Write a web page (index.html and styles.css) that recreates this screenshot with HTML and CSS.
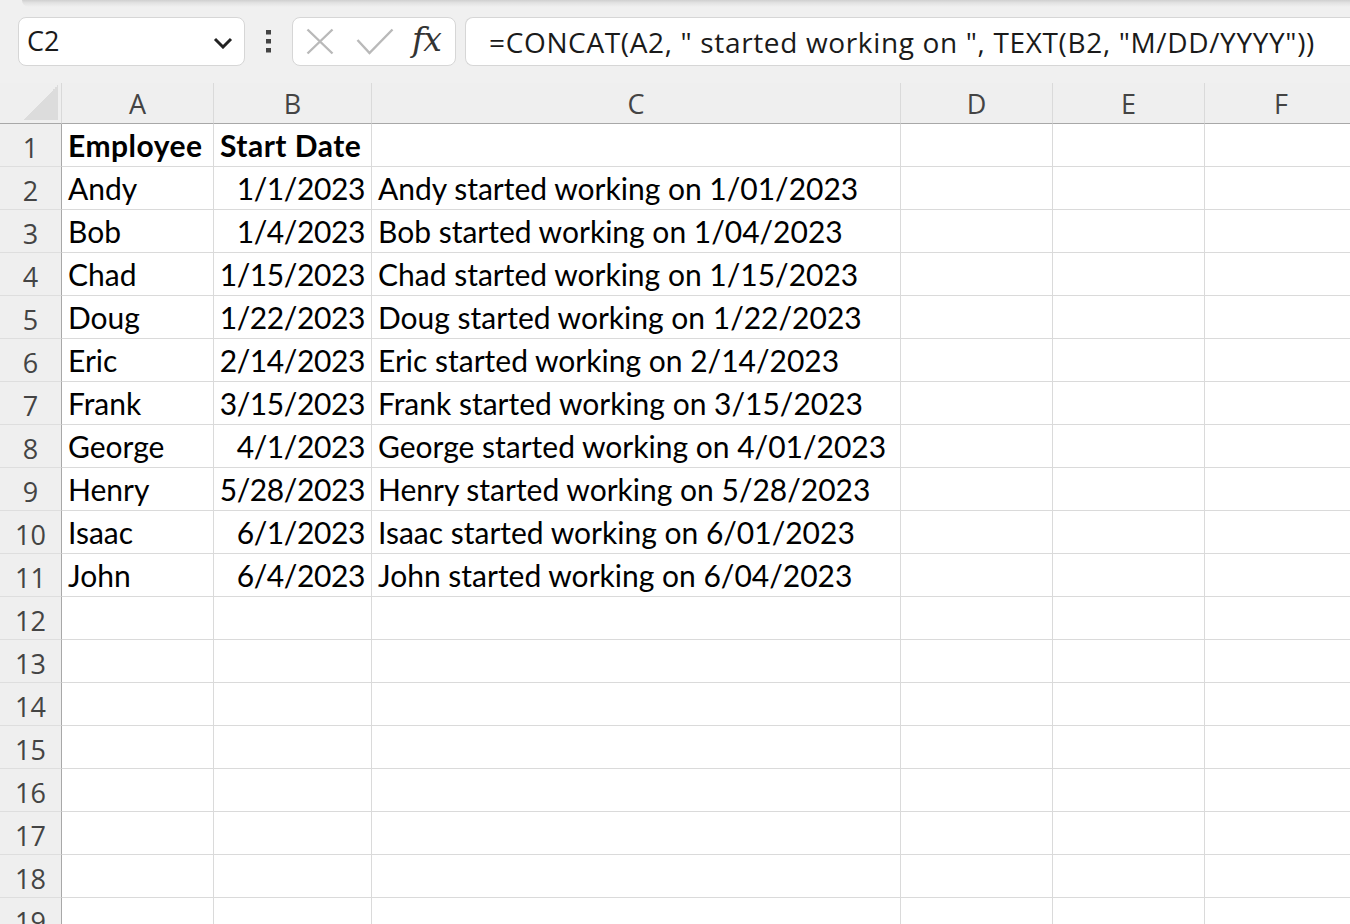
FILE: index.html
```html
<!DOCTYPE html>
<html>
<head>
<meta charset="utf-8">
<link rel="stylesheet" href="styles.css">
</head>
<body>
<div class="app">
  <div class="topbar">
    <div class="shadow"></div>
    <div class="fbar">
      <div class="namebox">
        <span class="nb-text">C2</span>
        <svg class="chev" width="20" height="12" viewBox="0 0 20 12"><path d="M2 2 L10 10 L18 2" fill="none" stroke="#222" stroke-width="3"/></svg>
      </div>
      <svg class="dots" width="6" height="24" viewBox="0 0 6 24"><rect x="0" y="0" width="5" height="4.5" fill="#444"/><rect x="0" y="9" width="5" height="4.5" fill="#444"/><rect x="0" y="18" width="5" height="4.5" fill="#444"/></svg>
      <div class="fxbox">
        <svg class="ic-x" width="28" height="27" viewBox="0 0 28 27"><path d="M1.5 1.5 L26.5 25.5 M26.5 1.5 L1.5 25.5" fill="none" stroke="#b9b9b9" stroke-width="2.4"/></svg>
        <svg class="ic-check" width="38" height="27" viewBox="0 0 38 27"><path d="M1.5 12 L13.5 25 L36.5 1.5" fill="none" stroke="#b9b9b9" stroke-width="2.4"/></svg>
        <span class="fx">fx</span>
      </div>
      <div class="formula">=CONCAT(A2, " started working on ", TEXT(B2, "M/DD/YYYY"))</div>
    </div>
  </div>
  <div class="sheet">
    <div class="corner"><div class="tri"></div></div>
    <div class="ch">A</div><div class="ch">B</div><div class="ch">C</div><div class="ch">D</div><div class="ch">E</div><div class="ch last">F</div>

    <div class="rh">1</div><div class="c b">Employee</div><div class="c b">Start Date</div><div class="c"></div><div class="c"></div><div class="c"></div><div class="c"></div>
    <div class="rh">2</div><div class="c">Andy</div><div class="c r">1/1/2023</div><div class="c">Andy started working on 1/01/2023</div><div class="c"></div><div class="c"></div><div class="c"></div>
    <div class="rh">3</div><div class="c">Bob</div><div class="c r">1/4/2023</div><div class="c">Bob started working on 1/04/2023</div><div class="c"></div><div class="c"></div><div class="c"></div>
    <div class="rh">4</div><div class="c">Chad</div><div class="c r">1/15/2023</div><div class="c">Chad started working on 1/15/2023</div><div class="c"></div><div class="c"></div><div class="c"></div>
    <div class="rh">5</div><div class="c">Doug</div><div class="c r">1/22/2023</div><div class="c">Doug started working on 1/22/2023</div><div class="c"></div><div class="c"></div><div class="c"></div>
    <div class="rh">6</div><div class="c">Eric</div><div class="c r">2/14/2023</div><div class="c">Eric started working on 2/14/2023</div><div class="c"></div><div class="c"></div><div class="c"></div>
    <div class="rh">7</div><div class="c">Frank</div><div class="c r">3/15/2023</div><div class="c">Frank started working on 3/15/2023</div><div class="c"></div><div class="c"></div><div class="c"></div>
    <div class="rh">8</div><div class="c">George</div><div class="c r">4/1/2023</div><div class="c">George started working on 4/01/2023</div><div class="c"></div><div class="c"></div><div class="c"></div>
    <div class="rh">9</div><div class="c">Henry</div><div class="c r">5/28/2023</div><div class="c">Henry started working on 5/28/2023</div><div class="c"></div><div class="c"></div><div class="c"></div>
    <div class="rh">10</div><div class="c">Isaac</div><div class="c r">6/1/2023</div><div class="c">Isaac started working on 6/01/2023</div><div class="c"></div><div class="c"></div><div class="c"></div>
    <div class="rh">11</div><div class="c">John</div><div class="c r">6/4/2023</div><div class="c">John started working on 6/04/2023</div><div class="c"></div><div class="c"></div><div class="c"></div>
    <div class="rh">12</div><div class="c"></div><div class="c"></div><div class="c"></div><div class="c"></div><div class="c"></div><div class="c"></div>
    <div class="rh">13</div><div class="c"></div><div class="c"></div><div class="c"></div><div class="c"></div><div class="c"></div><div class="c"></div>
    <div class="rh">14</div><div class="c"></div><div class="c"></div><div class="c"></div><div class="c"></div><div class="c"></div><div class="c"></div>
    <div class="rh">15</div><div class="c"></div><div class="c"></div><div class="c"></div><div class="c"></div><div class="c"></div><div class="c"></div>
    <div class="rh">16</div><div class="c"></div><div class="c"></div><div class="c"></div><div class="c"></div><div class="c"></div><div class="c"></div>
    <div class="rh">17</div><div class="c"></div><div class="c"></div><div class="c"></div><div class="c"></div><div class="c"></div><div class="c"></div>
    <div class="rh">18</div><div class="c"></div><div class="c"></div><div class="c"></div><div class="c"></div><div class="c"></div><div class="c"></div>
    <div class="rh">19</div><div class="c"></div><div class="c"></div><div class="c"></div><div class="c"></div><div class="c"></div><div class="c"></div>
  </div>
</div>
</body>
</html>
```

FILE: styles.css
```css
html, body {
  margin: 0;
  padding: 0;
  background: #f0f0f0;
  overflow: hidden;
}
.app {
  width: 1350px;
  height: 924px;
  overflow: hidden;
  display: flex;
  flex-direction: column;
}
.topbar {
  height: 83px;
  flex-shrink: 0;
  background: #f0f0f0;
  display: flex;
  flex-direction: column;
}
.shadow {
  height: 7px;
  margin-left: 22px;
  border-bottom-left-radius: 8px;
  background: linear-gradient(#cfcfcf, #e2e2e2 40%, #f0f0f0);
}
.fbar {
  margin-top: 10px;
  height: 49px;
  display: flex;
  align-items: stretch;
  padding-left: 18px;
}
.namebox {
  width: 227px;
  box-sizing: border-box;
  background: #fff;
  border: 1px solid #d6d6d6;
  border-radius: 8px;
  display: flex;
  align-items: center;
  justify-content: space-between;
  padding: 0 11px 0 8px;
}
.nb-text {
  font-family: "Open Sans", sans-serif;
  font-size: 27px;
  color: #1a1a1a;
  line-height: 1;
  padding-bottom: 2px;
}
.chev { margin-top: 2px; }
.dots {
  align-self: center;
  margin: 0 20px 0 21px;
}
.fxbox {
  width: 164px;
  box-sizing: border-box;
  background: #fff;
  border: 1px solid #d6d6d6;
  border-radius: 8px;
  display: flex;
  align-items: center;
  padding-left: 13px;
}
.ic-x { margin-right: 22px; }
.ic-check { margin-right: 18px; }
.fx {
  font-family: "DejaVu Serif", "Liberation Serif", serif;
  font-style: italic;
  font-size: 33px;
  color: #333;
  line-height: 1;
  padding-bottom: 4px;
  letter-spacing: -1px;
}
.formula {
  margin-left: 9px;
  flex: 1;
  background: #fff;
  border: 1px solid #d6d6d6;
  border-right: none;
  border-radius: 8px 0 0 8px;
  font-family: "Open Sans", sans-serif;
  font-size: 28px;
  letter-spacing: 0.65px;
  color: #1a1a1a;
  white-space: nowrap;
  display: flex;
  align-items: center;
  padding-left: 23px;
  padding-top: 1px;
  box-sizing: border-box;
}
.sheet {
  display: grid;
  width: 1357px;
  flex-shrink: 0;
  grid-template-columns: 62px 152px 158px 529px 152px 152px 152px;
  grid-template-rows: 41px;
  grid-auto-rows: 43px;
  background: #fff;
}
.corner {
  background: #efefef;
  border-right: 1px solid #d9d9d9;
  border-bottom: 1px solid #a8a8a8;
  box-sizing: border-box;
  display: flex;
  align-items: flex-end;
  justify-content: flex-end;
  padding: 0 3px 3px 0;
}
.tri {
  width: 35px;
  height: 35px;
  background: linear-gradient(to bottom right, transparent 50%, #dcdcdc 50%);
}
.ch {
  background: #efefef;
  border-right: 1px solid #dadada;
  border-bottom: 1px solid #a8a8a8;
  box-sizing: border-box;
  font-family: "Open Sans", sans-serif;
  font-size: 27px;
  color: #444;
  display: flex;
  justify-content: center;
  align-items: flex-end;
  line-height: 1;
  padding-bottom: 6px;
}
.ch.last { border-right: none; }
.rh {
  background: #efefef;
  border-right: 1px solid #a8a8a8;
  border-bottom: 1px solid #dedede;
  box-sizing: border-box;
  font-family: "Open Sans", sans-serif;
  font-size: 27px;
  color: #444;
  display: flex;
  justify-content: center;
  align-items: flex-end;
  line-height: 1;
  padding-bottom: 5px;
}
.c {
  border-right: 1px solid #dadada;
  border-bottom: 1px solid #dadada;
  box-sizing: border-box;
  font-family: Lato, "Open Sans", sans-serif;
  font-size: 30px;
  color: #000;
  display: flex;
  align-items: flex-end;
  line-height: 1;
  padding: 0 6px 6px 6px;
  white-space: nowrap;
  overflow: visible;
}
.c.b { font-weight: bold; letter-spacing: 0.5px; }
.c.r { justify-content: flex-end; letter-spacing: -0.4px; }
```
